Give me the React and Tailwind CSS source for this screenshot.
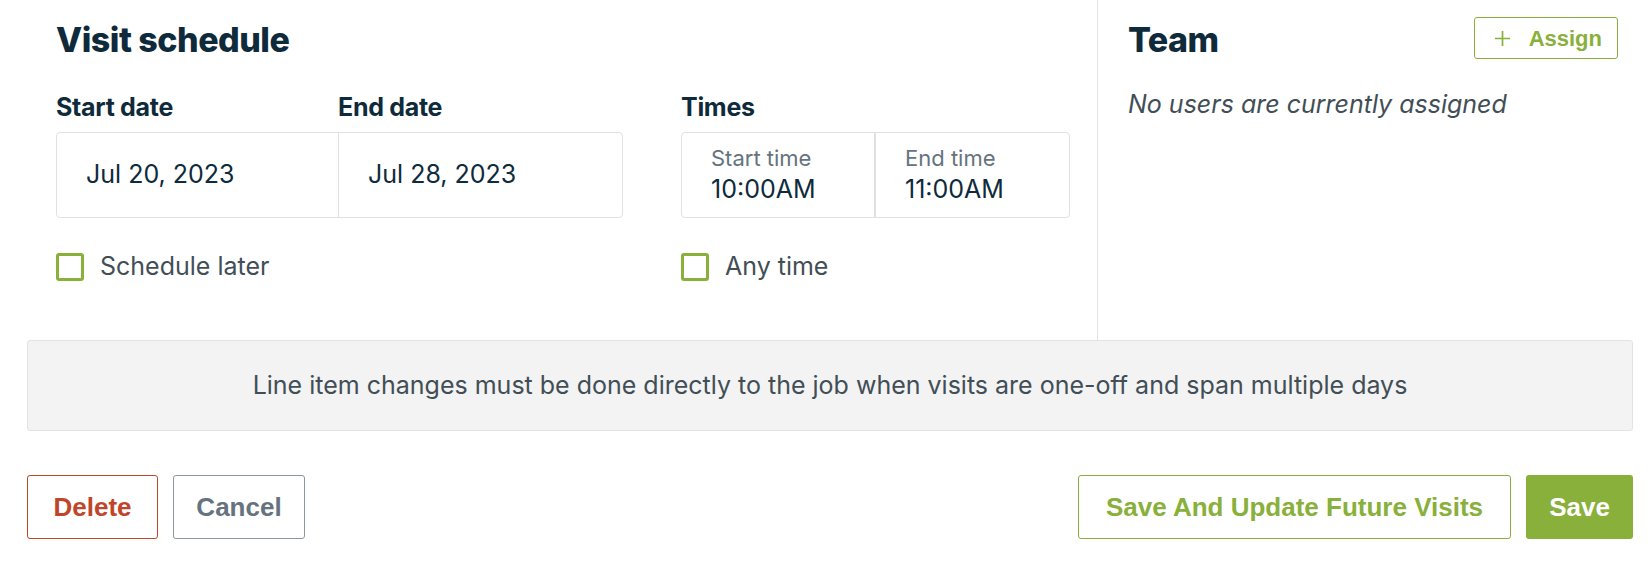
import React from 'react';

const heading = { fontFamily: 'Inter, "Noto Sans", sans-serif' };

const Checkbox = ({ label }) => (
  <label className="flex items-center gap-[16px]">
    <span className="w-[28px] h-[28px] border-[3px] border-[#88b03b] rounded-[3px] bg-white" />
    <span className="text-[25px] text-[#424e56]">{label}</span>
  </label>
);

const App = () => {
  return (
    <div className="w-[1652px] h-[562px] bg-white font-['Inter','Noto_Sans',sans-serif] text-[#0e2a3b]">
      <div className="ml-[27px] w-[1606px]">
        <div className="flex h-[340px]">
          <div className="w-[1071px] pl-[29px] pt-[20px] border-r border-[#e3e3e3]">
            <h2 className="text-[34px] leading-[40px] font-extrabold tracking-[-0.5px]" style={heading}>
              Visit schedule
            </h2>

            <div className="flex gap-[58px] mt-[32px]">
              <div className="w-[567px]">
                <div className="flex text-[25px] leading-[30px] font-bold tracking-[-0.3px]">
                  <div className="w-[282px]">Start date</div>
                  <div>End date</div>
                </div>
                <div className="mt-[10px] h-[86px] flex border border-[#e1e1e1] rounded-[4px]">
                  <div className="w-[282px] flex items-center pl-[29px] border-r border-[#e1e1e1] text-[25px]">
                    Jul 20, 2023
                  </div>
                  <div className="flex-1 flex items-center pl-[29px] text-[25px]">Jul 28, 2023</div>
                </div>
                <div className="mt-[30px]">
                  <Checkbox label="Schedule later" />
                </div>
              </div>

              <div className="w-[389px]">
                <div className="text-[25px] leading-[30px] font-bold tracking-[-0.3px]">Times</div>
                <div className="mt-[10px] h-[86px] flex border border-[#e1e1e1] rounded-[4px]">
                  <div className="w-[194px] flex flex-col justify-center pl-[29px] border-r-2 border-[#e1e1e1]">
                    <span className="text-[22px] leading-[28px] text-[#65737e]">Start time</span>
                    <span className="text-[25px] leading-[34px]">10:00AM</span>
                  </div>
                  <div className="flex-1 flex flex-col justify-center pl-[29px]">
                    <span className="text-[22px] leading-[28px] text-[#65737e]">End time</span>
                    <span className="text-[25px] leading-[34px]">11:00AM</span>
                  </div>
                </div>
                <div className="mt-[30px]">
                  <Checkbox label="Any time" />
                </div>
              </div>
            </div>
          </div>

          <div className="flex-1 pl-[30px] pr-[15px] pt-[17px]">
            <div className="flex items-start justify-between">
              <h2 className="mt-[3px] text-[34px] leading-[40px] font-extrabold tracking-[-0.5px]" style={heading}>
                Team
              </h2>
              <button className="h-[42px] pl-[19px] pr-[15px] flex items-center gap-[18px] border border-[#88b03b] rounded-[3px] text-[#88b03b]">
                <svg width="17" height="17" viewBox="0 0 18 18" fill="none" stroke="currentColor" strokeWidth="1.8">
                  <path d="M9 1v16M1 9h16" />
                </svg>
                <span className="text-[22px] font-bold font-['Liberation_Sans',sans-serif]">Assign</span>
              </button>
            </div>
            <p className="mt-[26px] text-[25px] italic text-[#424e56]">No users are currently assigned</p>
          </div>
        </div>

        <div className="h-[91px] flex items-center justify-center bg-[#f3f3f3] border border-[#e3e3e3] rounded-[3px] text-[25px] text-[#424e56]">
          Line item changes must be done directly to the job when visits are one-off and span multiple days
        </div>

        <div className="mt-[44px] flex items-center justify-between font-['Liberation_Sans',sans-serif] font-bold text-[26px]">
          <div className="flex gap-[15px]">
            <button className="h-[64px] w-[131px] border border-[#c0462b] rounded-[3px] text-[#c0462b]">Delete</button>
            <button className="h-[64px] w-[132px] border border-[#8a97a0] rounded-[3px] text-[#65737e]">Cancel</button>
          </div>
          <div className="flex gap-[15px]">
            <button className="h-[64px] w-[433px] border border-[#88b03b] rounded-[3px] text-[#88b03b]">
              Save And Update Future Visits
            </button>
            <button className="h-[64px] w-[107px] bg-[#88b03b] rounded-[3px] text-white">Save</button>
          </div>
        </div>
      </div>
    </div>
  );
};

export default App;
